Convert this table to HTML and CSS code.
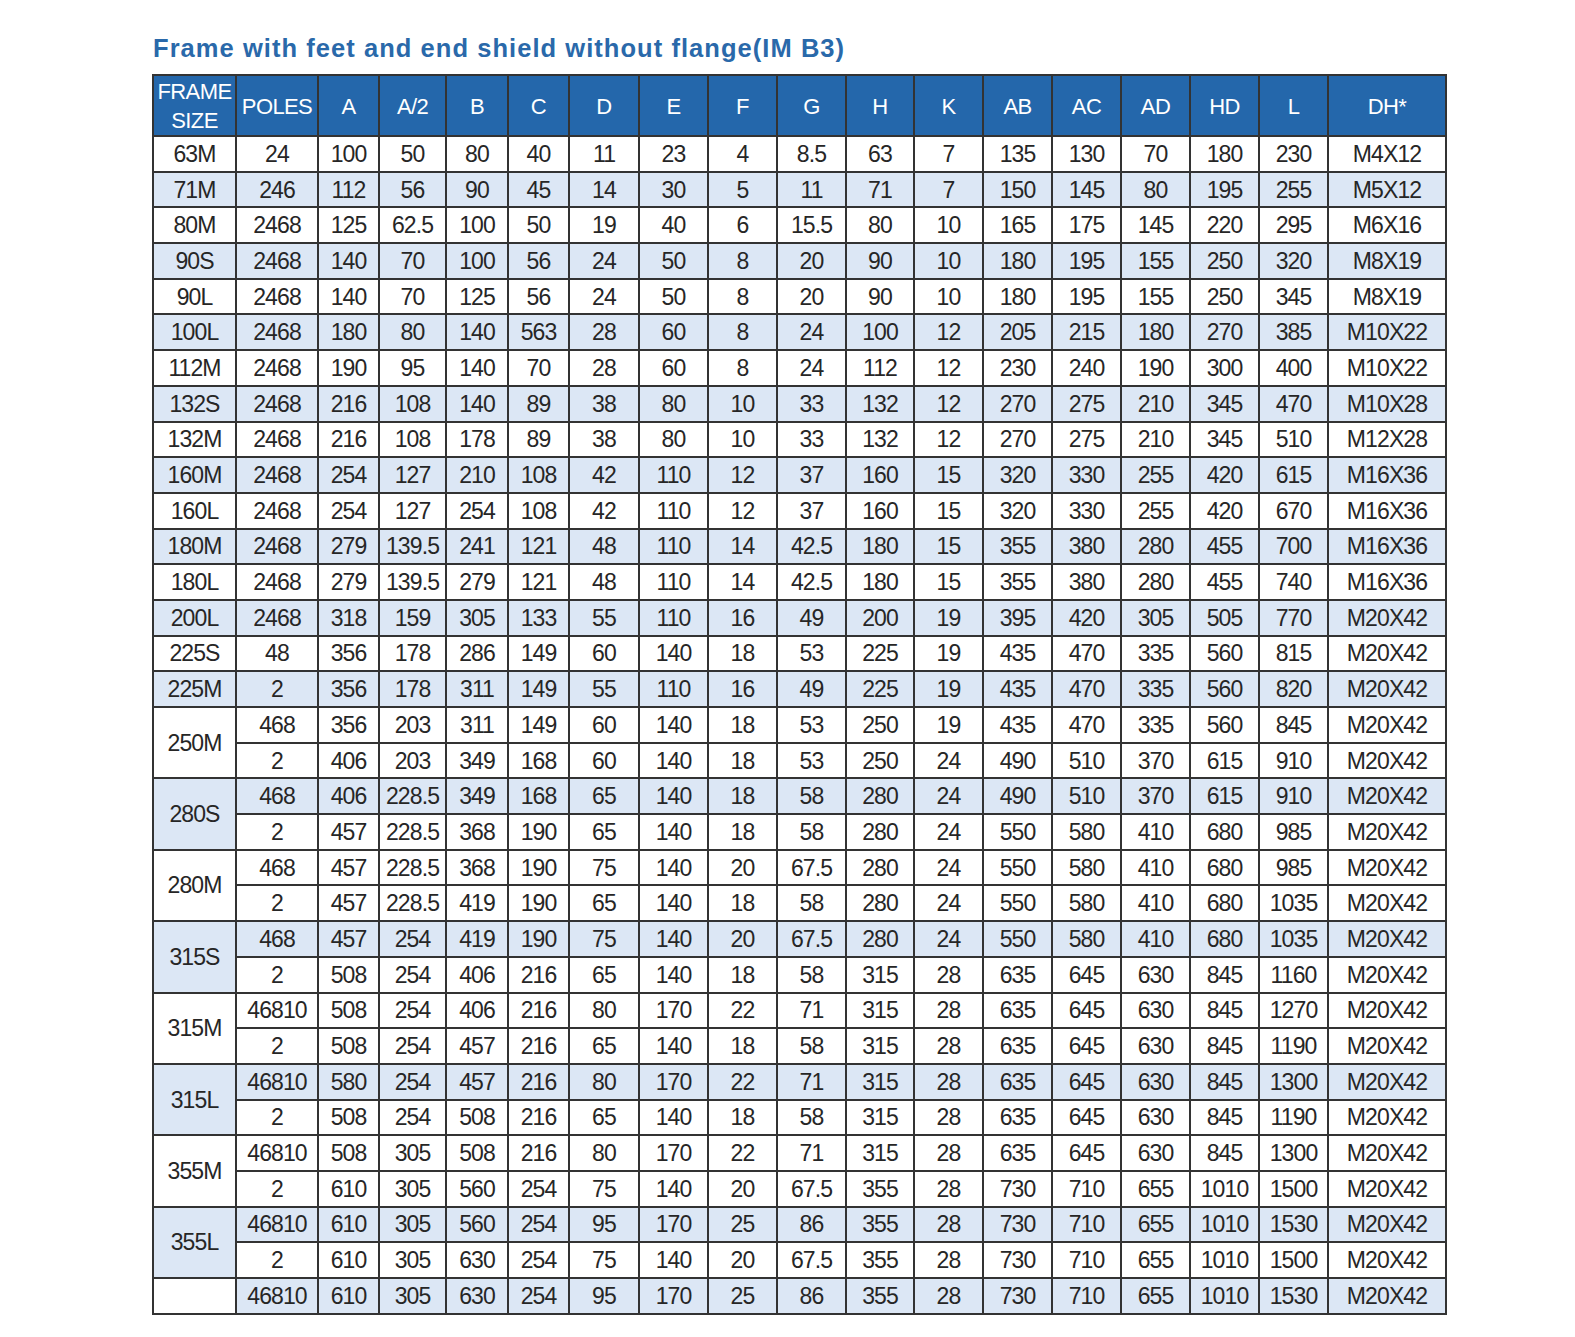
FILE: index.html
```html
<!DOCTYPE html>
<html>
<head>
<meta charset="utf-8">
<link rel="stylesheet" href="styles.css">
</head>
<body>
<div class="page">
<h1 class="title">Frame with feet and end shield without flange(IM B3)</h1>
<table class="dims">
<colgroup>
<col class="c83"><col class="c82"><col class="c61"><col class="c67"><col class="c62"><col class="c61"><col class="c70"><col class="c69"><col class="c69"><col class="c69"><col class="c68"><col class="c69"><col class="c69"><col class="c69"><col class="c69"><col class="c69"><col class="c69"><col class="c118">
</colgroup>
<thead>
<tr><th class="two">FRAME<br>SIZE</th><th>POLES</th><th>A</th><th>A/2</th><th>B</th><th>C</th><th>D</th><th>E</th><th>F</th><th>G</th><th>H</th><th>K</th><th>AB</th><th>AC</th><th>AD</th><th>HD</th><th>L</th><th>DH*</th></tr>
</thead>
<tbody>
<tr><td>63M</td><td>24</td><td>100</td><td>50</td><td>80</td><td>40</td><td>11</td><td>23</td><td>4</td><td>8.5</td><td>63</td><td>7</td><td>135</td><td>130</td><td>70</td><td>180</td><td>230</td><td>M4X12</td></tr>
<tr class="alt"><td>71M</td><td>246</td><td>112</td><td>56</td><td>90</td><td>45</td><td>14</td><td>30</td><td>5</td><td>11</td><td>71</td><td>7</td><td>150</td><td>145</td><td>80</td><td>195</td><td>255</td><td>M5X12</td></tr>
<tr><td>80M</td><td>2468</td><td>125</td><td>62.5</td><td>100</td><td>50</td><td>19</td><td>40</td><td>6</td><td>15.5</td><td>80</td><td>10</td><td>165</td><td>175</td><td>145</td><td>220</td><td>295</td><td>M6X16</td></tr>
<tr class="alt"><td>90S</td><td>2468</td><td>140</td><td>70</td><td>100</td><td>56</td><td>24</td><td>50</td><td>8</td><td>20</td><td>90</td><td>10</td><td>180</td><td>195</td><td>155</td><td>250</td><td>320</td><td>M8X19</td></tr>
<tr><td>90L</td><td>2468</td><td>140</td><td>70</td><td>125</td><td>56</td><td>24</td><td>50</td><td>8</td><td>20</td><td>90</td><td>10</td><td>180</td><td>195</td><td>155</td><td>250</td><td>345</td><td>M8X19</td></tr>
<tr class="alt"><td>100L</td><td>2468</td><td>180</td><td>80</td><td>140</td><td>563</td><td>28</td><td>60</td><td>8</td><td>24</td><td>100</td><td>12</td><td>205</td><td>215</td><td>180</td><td>270</td><td>385</td><td>M10X22</td></tr>
<tr><td>112M</td><td>2468</td><td>190</td><td>95</td><td>140</td><td>70</td><td>28</td><td>60</td><td>8</td><td>24</td><td>112</td><td>12</td><td>230</td><td>240</td><td>190</td><td>300</td><td>400</td><td>M10X22</td></tr>
<tr class="alt"><td>132S</td><td>2468</td><td>216</td><td>108</td><td>140</td><td>89</td><td>38</td><td>80</td><td>10</td><td>33</td><td>132</td><td>12</td><td>270</td><td>275</td><td>210</td><td>345</td><td>470</td><td>M10X28</td></tr>
<tr><td>132M</td><td>2468</td><td>216</td><td>108</td><td>178</td><td>89</td><td>38</td><td>80</td><td>10</td><td>33</td><td>132</td><td>12</td><td>270</td><td>275</td><td>210</td><td>345</td><td>510</td><td>M12X28</td></tr>
<tr class="alt"><td>160M</td><td>2468</td><td>254</td><td>127</td><td>210</td><td>108</td><td>42</td><td>110</td><td>12</td><td>37</td><td>160</td><td>15</td><td>320</td><td>330</td><td>255</td><td>420</td><td>615</td><td>M16X36</td></tr>
<tr><td>160L</td><td>2468</td><td>254</td><td>127</td><td>254</td><td>108</td><td>42</td><td>110</td><td>12</td><td>37</td><td>160</td><td>15</td><td>320</td><td>330</td><td>255</td><td>420</td><td>670</td><td>M16X36</td></tr>
<tr class="alt"><td>180M</td><td>2468</td><td>279</td><td>139.5</td><td>241</td><td>121</td><td>48</td><td>110</td><td>14</td><td>42.5</td><td>180</td><td>15</td><td>355</td><td>380</td><td>280</td><td>455</td><td>700</td><td>M16X36</td></tr>
<tr><td>180L</td><td>2468</td><td>279</td><td>139.5</td><td>279</td><td>121</td><td>48</td><td>110</td><td>14</td><td>42.5</td><td>180</td><td>15</td><td>355</td><td>380</td><td>280</td><td>455</td><td>740</td><td>M16X36</td></tr>
<tr class="alt"><td>200L</td><td>2468</td><td>318</td><td>159</td><td>305</td><td>133</td><td>55</td><td>110</td><td>16</td><td>49</td><td>200</td><td>19</td><td>395</td><td>420</td><td>305</td><td>505</td><td>770</td><td>M20X42</td></tr>
<tr><td>225S</td><td>48</td><td>356</td><td>178</td><td>286</td><td>149</td><td>60</td><td>140</td><td>18</td><td>53</td><td>225</td><td>19</td><td>435</td><td>470</td><td>335</td><td>560</td><td>815</td><td>M20X42</td></tr>
<tr class="alt"><td>225M</td><td>2</td><td>356</td><td>178</td><td>311</td><td>149</td><td>55</td><td>110</td><td>16</td><td>49</td><td>225</td><td>19</td><td>435</td><td>470</td><td>335</td><td>560</td><td>820</td><td>M20X42</td></tr>
<tr><td rowspan="2" class="fw">250M</td><td>468</td><td>356</td><td>203</td><td>311</td><td>149</td><td>60</td><td>140</td><td>18</td><td>53</td><td>250</td><td>19</td><td>435</td><td>470</td><td>335</td><td>560</td><td>845</td><td>M20X42</td></tr>
<tr><td>2</td><td>406</td><td>203</td><td>349</td><td>168</td><td>60</td><td>140</td><td>18</td><td>53</td><td>250</td><td>24</td><td>490</td><td>510</td><td>370</td><td>615</td><td>910</td><td>M20X42</td></tr>
<tr class="alt"><td rowspan="2" class="fb">280S</td><td>468</td><td>406</td><td>228.5</td><td>349</td><td>168</td><td>65</td><td>140</td><td>18</td><td>58</td><td>280</td><td>24</td><td>490</td><td>510</td><td>370</td><td>615</td><td>910</td><td>M20X42</td></tr>
<tr><td>2</td><td>457</td><td>228.5</td><td>368</td><td>190</td><td>65</td><td>140</td><td>18</td><td>58</td><td>280</td><td>24</td><td>550</td><td>580</td><td>410</td><td>680</td><td>985</td><td>M20X42</td></tr>
<tr><td rowspan="2" class="fw">280M</td><td>468</td><td>457</td><td>228.5</td><td>368</td><td>190</td><td>75</td><td>140</td><td>20</td><td>67.5</td><td>280</td><td>24</td><td>550</td><td>580</td><td>410</td><td>680</td><td>985</td><td>M20X42</td></tr>
<tr><td>2</td><td>457</td><td>228.5</td><td>419</td><td>190</td><td>65</td><td>140</td><td>18</td><td>58</td><td>280</td><td>24</td><td>550</td><td>580</td><td>410</td><td>680</td><td>1035</td><td>M20X42</td></tr>
<tr class="alt"><td rowspan="2" class="fb">315S</td><td>468</td><td>457</td><td>254</td><td>419</td><td>190</td><td>75</td><td>140</td><td>20</td><td>67.5</td><td>280</td><td>24</td><td>550</td><td>580</td><td>410</td><td>680</td><td>1035</td><td>M20X42</td></tr>
<tr><td>2</td><td>508</td><td>254</td><td>406</td><td>216</td><td>65</td><td>140</td><td>18</td><td>58</td><td>315</td><td>28</td><td>635</td><td>645</td><td>630</td><td>845</td><td>1160</td><td>M20X42</td></tr>
<tr><td rowspan="2" class="fw">315M</td><td>46810</td><td>508</td><td>254</td><td>406</td><td>216</td><td>80</td><td>170</td><td>22</td><td>71</td><td>315</td><td>28</td><td>635</td><td>645</td><td>630</td><td>845</td><td>1270</td><td>M20X42</td></tr>
<tr><td>2</td><td>508</td><td>254</td><td>457</td><td>216</td><td>65</td><td>140</td><td>18</td><td>58</td><td>315</td><td>28</td><td>635</td><td>645</td><td>630</td><td>845</td><td>1190</td><td>M20X42</td></tr>
<tr class="alt"><td rowspan="2" class="fb">315L</td><td>46810</td><td>580</td><td>254</td><td>457</td><td>216</td><td>80</td><td>170</td><td>22</td><td>71</td><td>315</td><td>28</td><td>635</td><td>645</td><td>630</td><td>845</td><td>1300</td><td>M20X42</td></tr>
<tr><td>2</td><td>508</td><td>254</td><td>508</td><td>216</td><td>65</td><td>140</td><td>18</td><td>58</td><td>315</td><td>28</td><td>635</td><td>645</td><td>630</td><td>845</td><td>1190</td><td>M20X42</td></tr>
<tr><td rowspan="2" class="fw">355M</td><td>46810</td><td>508</td><td>305</td><td>508</td><td>216</td><td>80</td><td>170</td><td>22</td><td>71</td><td>315</td><td>28</td><td>635</td><td>645</td><td>630</td><td>845</td><td>1300</td><td>M20X42</td></tr>
<tr><td>2</td><td>610</td><td>305</td><td>560</td><td>254</td><td>75</td><td>140</td><td>20</td><td>67.5</td><td>355</td><td>28</td><td>730</td><td>710</td><td>655</td><td>1010</td><td>1500</td><td>M20X42</td></tr>
<tr class="alt"><td rowspan="2" class="fb">355L</td><td>46810</td><td>610</td><td>305</td><td>560</td><td>254</td><td>95</td><td>170</td><td>25</td><td>86</td><td>355</td><td>28</td><td>730</td><td>710</td><td>655</td><td>1010</td><td>1530</td><td>M20X42</td></tr>
<tr><td>2</td><td>610</td><td>305</td><td>630</td><td>254</td><td>75</td><td>140</td><td>20</td><td>67.5</td><td>355</td><td>28</td><td>730</td><td>710</td><td>655</td><td>1010</td><td>1500</td><td>M20X42</td></tr>
<tr class="alt"><td class="fw"></td><td>46810</td><td>610</td><td>305</td><td>630</td><td>254</td><td>95</td><td>170</td><td>25</td><td>86</td><td>355</td><td>28</td><td>730</td><td>710</td><td>655</td><td>1010</td><td>1530</td><td>M20X42</td></tr>
</tbody>
</table>
</div>
</body>
</html>
```

FILE: styles.css
```css
html, body {
  margin: 0;
  padding: 0;
  background: #ffffff;
}
.page {
  padding: 34px 0 0 152px;
  font-family: "Liberation Sans", Arial, sans-serif;
}
.title {
  margin: 0 0 11px 1px;
  font-size: 25.5px;
  line-height: 29px;
  font-weight: bold;
  color: #2a69aa;
  letter-spacing: 1.05px;
}
.dims {
  border-collapse: collapse;
  table-layout: fixed;
  width: 1294px;
  border: 2px solid #333;
}
.c83 { width: 83px; }
.c82 { width: 82px; }
.c61 { width: 61px; }
.c62 { width: 62px; }
.c67 { width: 67px; }
.c68 { width: 68px; }
.c69 { width: 69px; }
.c70 { width: 70px; }
.c118 { width: 118px; }
.dims th, .dims td {
  border: 2px solid #333;
  padding: 0;
  text-align: center;
  vertical-align: middle;
  font-size: 23px;
  line-height: 26px;
  letter-spacing: -0.9px;
  font-weight: normal;
  white-space: nowrap;
}
.dims th {
  background: #2467ab;
  color: #ffffff;
  height: 56px;
  padding-top: 3px;
  font-size: 22px;
  letter-spacing: -0.6px;
}
.dims th.two {
  line-height: 29px;
  padding-top: 1px;
}
.dims td {
  color: #262626;
  height: 33.7px;
  background: #ffffff;
}
.dims tr.alt td {
  background: #dce7f5;
}
.dims tr td.fw {
  background: #ffffff;
}
.dims tr td.fb {
  background: #dce7f5;
}
```
